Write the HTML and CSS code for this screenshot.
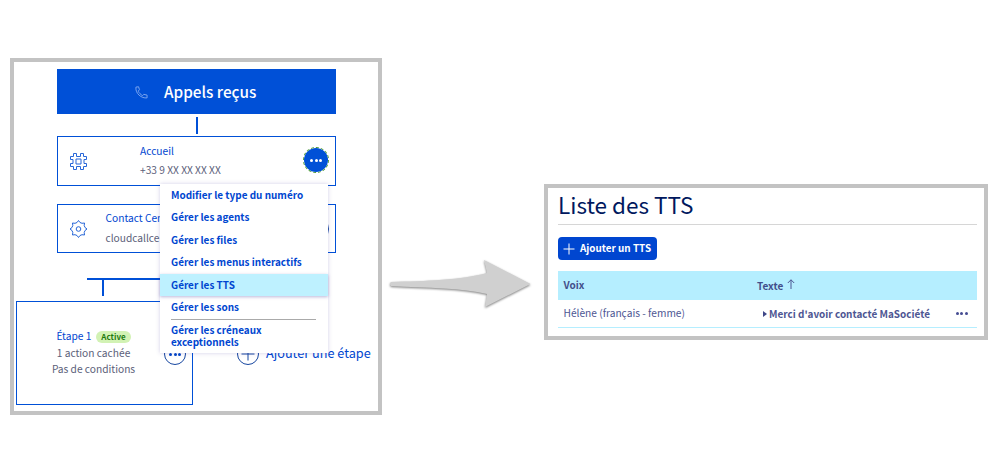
FILE: index.html
```html
<!DOCTYPE html>
<html lang="fr">
<head>
<meta charset="utf-8">
<title>Liste des TTS</title>
<link rel="stylesheet" href="styles.css">
</head>
<body>
<main class="page">
  <section class="panel flow">
    <header class="flow-head">
      <svg class="phone" viewBox="0 0 14 14"><path d="M1 1.200 3.800.8 4.800 4 3.400 5.600C4.400 7.500 6.200 9.300 8.200 10.400L9.400 9 13 9.800V12.800C6.800 13.600.2 8 1 1.200Z"/></svg>
      <span>Appels reçus</span>
    </header>
    <div class="stem"></div>
    <article class="card card-number">
      <svg class="hash" viewBox="0 0 20 20"><path d="M4.500 1.500H7.500V4.500H11.500V1.500H14.500V4.500H17.500V7.500H15V11.500H17.500V14.500H14.500V17.500H11.500V14.500H7.500V17.500H4.500V14.500H1.500V11.500H4V7.500H1.500V4.500H4.500ZM7 7V12H12V7Z"/></svg>
      <div class="card-text number-text"><b class="link">Accueil</b><span>+33 9 XX XX XX XX</span></div>
      <button class="dots dots-active"><i></i><i></i><i></i></button>
      <nav class="menu">
        <a>Modifier le type du numéro</a>
        <a>Gérer les agents</a>
        <a>Gérer les files</a>
        <a>Gérer les menus interactifs</a>
        <a class="selected">Gérer les TTS</a>
        <a>Gérer les sons</a>
        <hr>
        <a class="wrap">Gérer les créneaux exceptionnels</a>
      </nav>
    </article>
    <article class="card card-center">
      <svg class="gear" viewBox="0 0 20 20"><path d="M8 3.500 9.500 1.500 11 3.500 13 4.300 15.500 4 15.200 6.500 16 8.500 18 10 16 11.500 15.200 13.500 15.500 16 13 15.700 11 16.500 9.500 18.500 8 16.500 6 15.700 3.500 16 3.800 13.500 3 11.500 1 10 3 8.500 3.800 6.500 3.500 4 6 4.300Z"/><circle cx="9.500" cy="10" r="2.300"/></svg>
      <div class="card-text center-text"><b class="link">Contact Center</b><span>cloudcallcenter</span></div>
      <button class="dots dots-outline"><i></i><i></i><i></i></button>
    </article>
    <div class="branch"></div>
    <div class="branch-stem"></div>
    <div class="steps">
      <article class="step">
        <div class="step-name"><b class="link">Étape 1</b><em class="badge">Active</em></div>
        <div class="step-line">1 action cachée</div>
        <div class="step-line">Pas de conditions</div>
        <button class="dots dots-outline step-dots"><i></i><i></i><i></i></button>
      </article>
      <div class="add-step">
        <svg viewBox="0 0 24 24"><circle cx="12" cy="12" r="10.500"/><path d="M12 5.500v13M5.500 12h13"/></svg>
        <span>Ajouter une étape</span>
      </div>
    </div>
  </section>
  <svg class="arrow" viewBox="0 0 160 80"><path d="M11 32C45 31 82 30 107 23L104 10 150.500 34 105 57 107 44C82 38 48 38 11 36Q9 34 11 32Z"/></svg>
  <section class="panel list">
    <h1>Liste des TTS</h1>
    <button class="add"><svg viewBox="0 0 12 12"><path d="M6 .5v11M.5 6h11"/></svg><span>Ajouter un TTS</span></button>
    <div class="row row-head">
      <span class="voice">Voix</span>
      <span class="texte">Texte</span>
      <svg class="sort" viewBox="0 0 8 10"><path d="M4 10V.8M.8 4 4 .8 7.200 4"/></svg>
    </div>
    <div class="row row-item">
      <span class="voice">Hélène (français - femme)</span>
      <i class="caret"></i>
      <span class="message">Merci d'avoir contacté MaSociété</span>
      <span class="more"><i></i><i></i><i></i></span>
    </div>
  </section>
</main>
</body>
</html>
```
FILE: styles.css
```css
* { box-sizing: border-box; }
body { margin: 0; background: #fff; font-family: "Noto Sans CJK SC", "Noto Sans", sans-serif; font-size: 10.2px; color: #4d5693; }
button { padding: 0; border: 0; font: inherit; }
svg { display: block; flex: none; fill: none; overflow: visible; }
span, b { white-space: nowrap; }
.page { display: flex; align-items: flex-start; width: 1000px; height: 450px; padding: 58px 0 0 10px; overflow: hidden; }
.panel { border: 4px solid #c3c3c3; flex: none; }
.link { color: #0046d0; font-weight: 400; }

.flow { width: 372px; height: 357px; padding: 7px 0 0 2px; overflow: hidden; }
.flow-head { display: flex; align-items: center; width: 279px; height: 45px; margin-left: 41px; padding-left: 78px; background: #0050d7; color: #fff; font-size: 15.3px; font-weight: 500; }
.flow-head span { margin-left: 16px; padding-bottom: 2px; line-height: 20px; }
.phone { width: 13px; height: 13px; margin-top: 1px; stroke: #82aaf0; stroke-width: 1; }
.stem { width: 2px; height: 17px; margin: 3px 0 2px 180px; background: #0050d7; }
.card { position: relative; display: flex; align-items: center; width: 279px; margin-left: 41px; border: 1px solid #0050d7; color: #5b6079; }
.card-number { height: 50px; }
.card-center { height: 49px; margin-top: 18px; }
.card-text { display: flex; flex-direction: column; padding-bottom: 2px; line-height: 19px; }
.hash, .gear { width: 20px; height: 20px; margin-left: 11px; stroke: #2867d8; stroke-width: 1; stroke-linejoin: round; }
.hash { margin-top: 1px; }
.number-text { margin-left: 51px; }
.center-text { margin-left: 16.5px; line-height: 20px; }
.dots { display: flex; align-items: center; justify-content: center; gap: 1.5px; width: 24px; height: 24px; margin-left: auto; margin-right: 6px; border-radius: 50%; }
.dots i { width: 3px; height: 3px; border-radius: 50%; background: #0046c8; }
.dots-active { margin-bottom: 2px; margin-right: 7px; background: #0050d7; outline: 1px dashed #4d9a39; }
.dots-active i { background: #fff; }
.dots-outline { background: #fff; border: 1px solid #1646a0; }
.menu { position: absolute; z-index: 2; left: 102px; top: 47px; width: 168px; height: 169px; background: #fff; box-shadow: 0 0 4px rgba(70, 60, 160, .25); color: #0046d0; font-size: 9.95px; font-weight: 700; }
.menu a { display: block; height: 22.400px; padding-left: 11px; line-height: 22px; white-space: nowrap; }
.menu .selected { background: #bef1ff; box-shadow: 0 1px 3px rgba(60, 50, 150, .35); }
.menu hr { height: 1px; margin: 1px 12px 4px 11px; border: 0; background: #aaa; }
.menu .wrap { width: 130px; height: 24px; line-height: 12px; white-space: normal; }
.branch { width: 220px; height: 2px; margin: 25px 0 0 71px; background: #0050d7; }
.branch-stem { width: 2px; height: 16px; margin-left: 86px; background: #0050d7; }
.steps { display: flex; margin-top: 5px; }
.step { position: relative; display: flex; flex-direction: column; align-items: center; width: 177px; height: 104px; padding: 26px 22px 0 0; border: 1px solid #0050d7; color: #5b6079; }
.step-name { display: flex; align-items: center; gap: 5px; height: 17px; }
.step-name .link { padding-bottom: 2px; }
.badge { padding: 0 5px; border-radius: 6px; background: #d2f2b4; color: #1f7a0f; font-size: 8px; font-style: normal; font-weight: 700; line-height: 12px; }
.step-line { height: 16px; line-height: 16px; }
.step-dots { position: absolute; right: 6px; top: 41px; margin: 0; width: 22px; height: 22px; }
.add-step { display: flex; align-items: center; height: 24px; margin: 41px 0 0 43px; gap: 6px; color: #0046d0; font-size: 12.7px; }
.add-step span { padding-bottom: 3px; }
.add-step svg { width: 24px; height: 24px; stroke: #1646a0; stroke-width: 1; }

.arrow { width: 160px; height: 80px; margin: 192px 0 0 -2px; fill: #d0d0d0; filter: drop-shadow(0 1px 1px rgba(0, 0, 0, .5)); }
.list { width: 444px; height: 156px; margin: 126px 0 0 4px; padding: 0 7px 0 10px; }
h1 { height: 37px; margin: 0; border-bottom: 1px solid #d6d6d6; color: #00185e; font-size: 22.5px; font-weight: 400; line-height: 33px; }
.add { display: flex; align-items: center; gap: 5px; width: 99px; height: 23px; margin: 12px 0 11px; padding-left: 5px; border-radius: 4px; background: #0046d0; color: #fff; font-size: 9.9px; font-weight: 700; }
.add span { padding-bottom: 2px; }
.add svg { width: 12px; height: 12px; stroke: #fff; stroke-width: 1; }
.row { display: flex; align-items: center; }
.row-head { height: 29px; background: #b5eeff; font-weight: 700; font-size: 10px; color: #434f8b; }
.row-head .voice { padding-bottom: 2px; }
.row-item { height: 28px; border-bottom: 1px solid #b5eeff; font-size: 10px; }
.voice { width: 199px; padding-left: 5.500px; }
.row-item .voice { padding-bottom: 2px; font-size: 10.200px; }
.sort { width: 8px; height: 10px; margin: -3px 0 0 4px; stroke: #4d5693; }
.caret { width: 0; height: 0; margin-left: 6px; border: solid transparent; border-width: 3px 0 3px 4px; border-left-color: #3f4787; }
.message { margin-left: 2px; font-size: 9.95px; font-weight: 700; }
.more { display: flex; gap: 1.5px; margin-left: auto; margin-right: 9.5px; }
.more i { width: 3px; height: 3px; border-radius: 50%; background: #454c92; }
```
